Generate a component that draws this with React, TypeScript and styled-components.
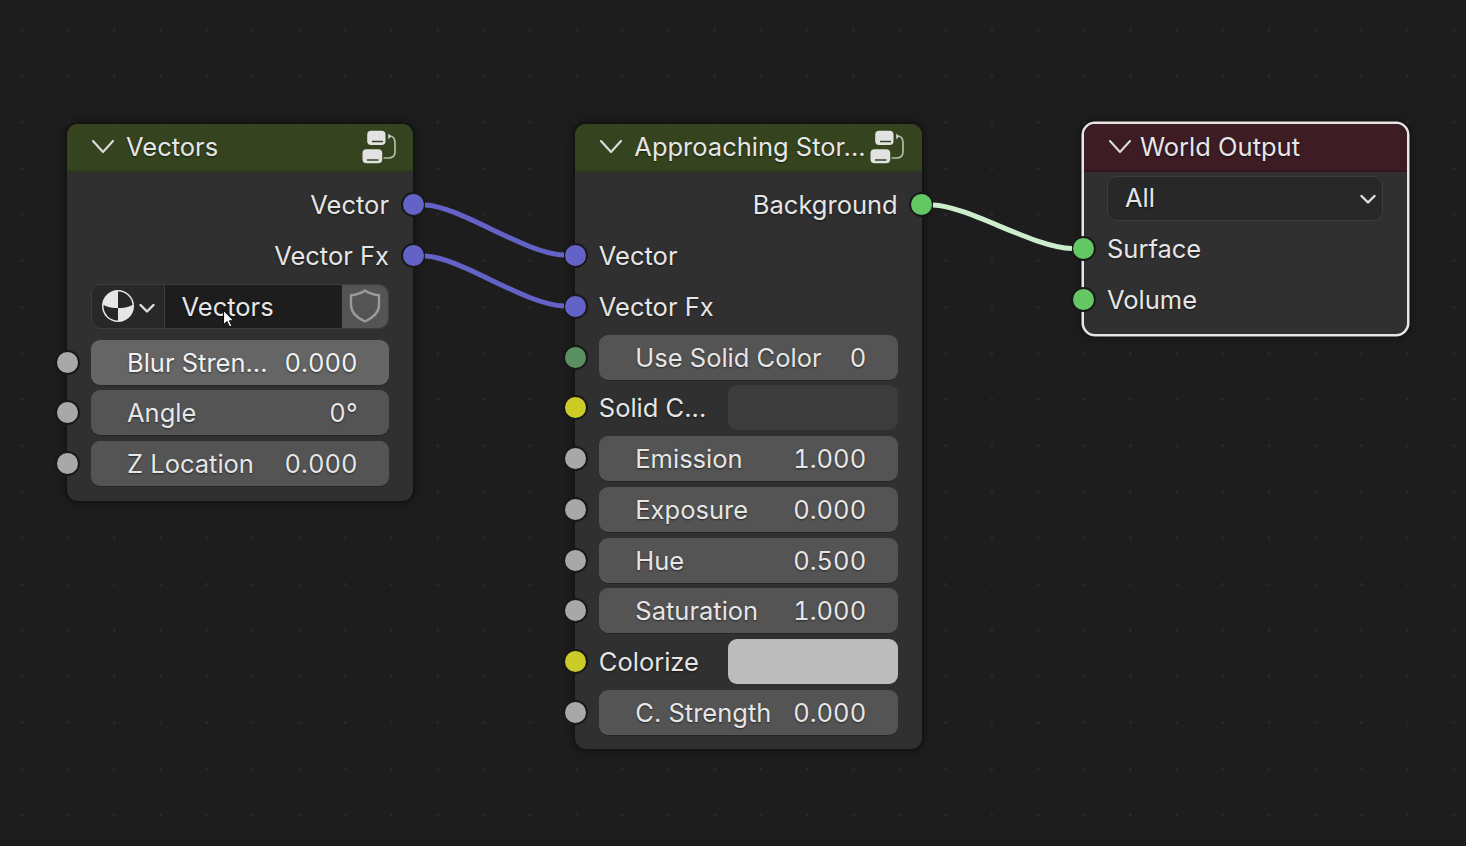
import React from "react";
import styled, { createGlobalStyle } from "styled-components";

const Global = createGlobalStyle`
  html, body { margin: 0; padding: 0; background: #1d1d1d; }
  body { font-family: Inter, "Noto Sans", sans-serif; overflow: hidden; }
`;

const Canvas = styled.main`
  position: relative;
  width: 1466px;
  height: 846px;
  overflow: hidden;
  background-color: #1d1d1d;
  background-image: radial-gradient(circle, #2a2a2a 0, #2a2a2a 1px, transparent 1.6px);
  background-size: 46.2px 46.2px;
  background-position: -1.1px 6.9px;
`;

const Wires = styled.svg`
  position: absolute;
  inset: 0;
  width: 1466px;
  height: 846px;
`;

const Node = styled.section<{ $x: number; $y: number; $w: number; $selected?: boolean }>`
  position: absolute;
  left: ${(p) => p.$x}px;
  top: ${(p) => p.$y}px;
  width: ${(p) => p.$w}px;
  box-sizing: border-box;
  display: flex;
  flex-direction: column;
  background: #303030;
  border-radius: 11px;
  box-shadow: ${(p) =>
    p.$selected
      ? "0 0 0 2.5px #e6e6e6, 0 0 0 4px #151515, 0 0 10px 4px rgba(0,0,0,.3)"
      : "0 0 0 2px #141414, 0 0 10px 3px rgba(0,0,0,.3)"};
`;

const Header = styled.header<{ $color: string; $h?: number; $pad?: number; $lift?: number }>`
  height: ${(p) => p.$h ?? 47.5}px;
  box-sizing: border-box;
  flex: none;
  display: flex;
  align-items: center;
  padding: 0 17.5px ${(p) => p.$lift ?? 0}px ${(p) => p.$pad ?? 24.5}px;
  background: ${(p) => p.$color};
  border-radius: 11px 11px 0 0;
  border-bottom: 2px solid rgba(0, 0, 0, 0.16);
  color: #e6e6e6;
  font-size: 25.5px;
  text-shadow: 0 1px 2px rgba(0, 0, 0, 0.55);
`;

const Title = styled.span<{ $gap?: number }>`
  margin-left: ${(p) => p.$gap ?? 12.5}px;
  flex: 1;
  white-space: nowrap;
`;

const Body = styled.div<{ $top: number; $bottom: number }>`
  display: flex;
  flex-direction: column;
  padding: ${(p) => p.$top}px 24px ${(p) => p.$bottom}px 23.5px;
`;

const Row = styled.div<{ $align?: "left" | "right"; $after?: number }>`
  position: relative;
  height: 50.75px;
  flex: none;
  display: flex;
  align-items: center;
  justify-content: ${(p) => (p.$align === "right" ? "flex-end" : "flex-start")};
  margin-bottom: ${(p) => p.$after ?? 0}px;
  color: #e6e6e6;
  font-size: 25.5px;
  text-shadow: 0 1px 2px rgba(0, 0, 0, 0.55);
  white-space: nowrap;
`;

const Socket = styled.i<{ $color: string; $side: "left" | "right" }>`
  position: absolute;
  top: 50%;
  ${(p) => p.$side}: ${(p) => (p.$side === "left" ? -36 : -36.5)}px;
  width: 25px;
  height: 25px;
  box-sizing: border-box;
  margin-top: -12.5px;
  border-radius: 50%;
  background: ${(p) => p.$color};
  border: 2px solid #181818;
`;

const Field = styled.div<{ $hover?: boolean }>`
  width: 100%;
  height: 45px;
  box-sizing: border-box;
  display: flex;
  align-items: center;
  justify-content: space-between;
  padding: 0 31.5px 0 36.5px;
  background: ${(p) => (p.$hover ? "#656565" : "#545454")};
  border-radius: 9px;
  box-shadow: 0 1px 0 rgba(0, 0, 0, 0.2);
  color: ${(p) => (p.$hover ? "#f2f2f2" : "#e6e6e6")};
`;

const Value = styled.span`
  font-variant-numeric: tabular-nums;
`;

const Swatch = styled.div<{ $color: string }>`
  width: 170px;
  height: 45px;
  margin-left: auto;
  background: ${(p) => p.$color};
  border-radius: 9px;
`;

const DataBlock = styled.div`
  width: 100%;
  height: 45.5px;
  box-sizing: border-box;
  display: flex;
  border: 1px solid #3d3d3d;
  border-radius: 10px;
  overflow: hidden;
`;

const BlockPicker = styled.div`
  width: 73px;
  flex: none;
  display: flex;
  align-items: center;
  gap: 4px;
  padding-left: 9px;
  box-sizing: border-box;
  background: #282828;
  border-right: 1px solid #3d3d3d;
`;

const BlockName = styled.div`
  flex: 1;
  display: flex;
  align-items: center;
  padding-left: 17px;
  background: #1d1d1d;
`;

const BlockShield = styled.div`
  width: 46px;
  flex: none;
  display: flex;
  align-items: center;
  justify-content: center;
  background: #545454;
`;

const Dropdown = styled.div`
  width: 276px;
  height: 45px;
  box-sizing: border-box;
  margin: 3.5px 0 2.5px;
  flex: none;
  display: flex;
  align-items: center;
  justify-content: space-between;
  padding: 0 6px 1px 17px;
  background: #282828;
  border: 1px solid #3d3d3d;
  border-radius: 10px;
  color: #e6e6e6;
  font-size: 25.5px;
  text-shadow: 0 1px 2px rgba(0, 0, 0, 0.55);
`;

const Cursor = styled.svg`
  position: absolute;
  left: 222px;
  top: 309px;
  width: 14px;
  height: 20px;
`;

const Chevron = () => (
  <svg width="22" height="22" viewBox="0 0 22 22" fill="none" style={{ flex: "none" }}>
    <path d="M1 5l10 11 10-11" stroke="#dcdcdc" strokeWidth="2.1" strokeLinecap="round" strokeLinejoin="round" />
  </svg>
);

const SmallChevron = () => (
  <svg width="16" height="16" viewBox="0 0 16 16" fill="none" style={{ flex: "none", marginTop: 3 }}>
    <path d="M1.500 5l6.500 6.500L14.500 5" stroke="#e0e0e0" strokeWidth="2.400" strokeLinecap="round" strokeLinejoin="round" />
  </svg>
);

const GroupIcon = () => (
  <svg width="34" height="34" viewBox="0 0 34 34" fill="none" style={{ flex: "none" }}>
    <rect x="5.200" y="0.700" width="18.300" height="14.300" rx="4" fill="#e2e2e2" />
    <rect x="0.500" y="19.300" width="19.700" height="14" rx="4" fill="#e2e2e2" />
    <path d="M10 11.500h11M5 30h11.500" stroke="#36451f" strokeWidth="1.400" />
    <path d="M28 6c3.500.500 5 3.500 5 7v9c0 3.500-2.500 6-6.500 6h-5" stroke="#b5bba8" strokeWidth="1.700" />
    <path d="M26.300 3.500l2.700 2.800-2.700 3.200z" fill="#e2e2e2" />
  </svg>
);

const MaterialIcon = () => (
  <svg width="34" height="34" viewBox="0 0 34 34" style={{ flex: "none" }}>
    <circle cx="17" cy="17" r="16" fill="#e6e6e6" />
    <path d="M17 2.500A14.500 14.500 0 0 1 31.500 16C27 18.500 22 19 17 19Z" fill="#262626" />
    <path d="M17 19C12 19 7 18.500 2.500 16A14.500 14.500 0 0 0 17 31.500Z" fill="#262626" />
  </svg>
);

const ShieldIcon = () => (
  <svg width="32" height="34" viewBox="0 0 32 34" fill="none">
    <path
      d="M16 1.500c4 2.800 8.500 4.300 14 4.800v9.700c0 7-5.500 12.500-14 16.500-8.500-4-14-9.500-14-16.500V6.300c5.500-.5 10-2 14-4.800z"
      stroke="#9a9a9a"
      strokeWidth="2.400"
      strokeLinejoin="round"
    />
  </svg>
);

const VEC = "#6363c7";
const GREY = "#a8a8a8";
const GREEN = "#63c763";
const DIM = "#5a8f62";
const YEL = "#cccc29";

const NumField = ({
  color,
  label,
  value,
  hover,
}: {
  color: string;
  label: string;
  value: string;
  hover?: boolean;
}) => (
  <Row>
    <Socket $color={color} $side="left" />
    <Field $hover={hover}>
      <span>{label}</span>
      <Value>{value}</Value>
    </Field>
  </Row>
);

export default function App() {
  return (
    <Canvas>
      <Global />
      <Node $x={67} $y={124} $w={346}>
        <Header $color="#35441f">
          <Chevron />
          <Title>Vectors</Title>
          <GroupIcon />
        </Header>
        <Body $top={8} $bottom={11.5}>
          <Row $align="right">
            <Socket $color={VEC} $side="right" />
            Vector
          </Row>
          <Row $align="right">
            <Socket $color={VEC} $side="right" />
            Vector Fx
          </Row>
          <Row $after={5}>
            <DataBlock>
              <BlockPicker>
                <MaterialIcon />
                <SmallChevron />
              </BlockPicker>
              <BlockName>Vectors</BlockName>
              <BlockShield>
                <ShieldIcon />
              </BlockShield>
            </DataBlock>
          </Row>
          <NumField color={GREY} label="Blur Stren..." value="0.000" hover />
          <NumField color={GREY} label="Angle" value="0°" />
          <NumField color={GREY} label="Z Location" value="0.000" />
        </Body>
      </Node>

      <Node $x={575.3} $y={124} $w={346.4}>
        <Header $color="#35441f">
          <Chevron />
          <Title>Approaching Stor...</Title>
          <GroupIcon />
        </Header>
        <Body $top={8} $bottom={11.5}>
          <Row $align="right">
            <Socket $color={GREEN} $side="right" />
            Background
          </Row>
          <Row>
            <Socket $color={VEC} $side="left" />
            Vector
          </Row>
          <Row>
            <Socket $color={VEC} $side="left" />
            Vector Fx
          </Row>
          <NumField color={DIM} label="Use Solid Color" value="0" />
          <Row>
            <Socket $color={YEL} $side="left" />
            Solid C...
            <Swatch $color="#3c3c3c" />
          </Row>
          <NumField color={GREY} label="Emission" value="1.000" />
          <NumField color={GREY} label="Exposure" value="0.000" />
          <NumField color={GREY} label="Hue" value="0.500" />
          <NumField color={GREY} label="Saturation" value="1.000" />
          <Row>
            <Socket $color={YEL} $side="left" />
            Colorize
            <Swatch $color="#bcbcbc" />
          </Row>
          <NumField color={GREY} label="C. Strength" value="0.000" />
        </Body>
      </Node>

      <Node $x={1083.5} $y={124} $w={323.5} $selected>
        <Header $color="#3d1c24" $h={48} $pad={25} $lift={1}>
          <Chevron />
          <Title $gap={9.5}>World Output</Title>
        </Header>
        <Body $top={0} $bottom={9.5}>
          <Dropdown>
            All
            <SmallChevron />
          </Dropdown>
          <Row>
            <Socket $color={GREEN} $side="left" />
            Surface
          </Row>
          <Row>
            <Socket $color={GREEN} $side="left" />
            Volume
          </Row>
        </Body>
      </Node>

      <Wires viewBox="0 0 1466 846" fill="none">
        <path d="M425 205c35 1 100 49 139 50" stroke={VEC} strokeWidth="5" />
        <path d="M425 256c35 1 100 49 139 50" stroke={VEC} strokeWidth="5" />
        <path d="M933 205c35 1 100 42.500 139 43.500" stroke="#cdeecd" strokeWidth="5" />
      </Wires>

      <Cursor viewBox="0 0 14 20">
        <path d="M1.500 1V16L5 12.700 7.500 18 10 17 7.500 11.800H12Z" fill="#fff" stroke="#111" strokeWidth="1.100" strokeLinejoin="round" />
      </Cursor>
    </Canvas>
  );
}
